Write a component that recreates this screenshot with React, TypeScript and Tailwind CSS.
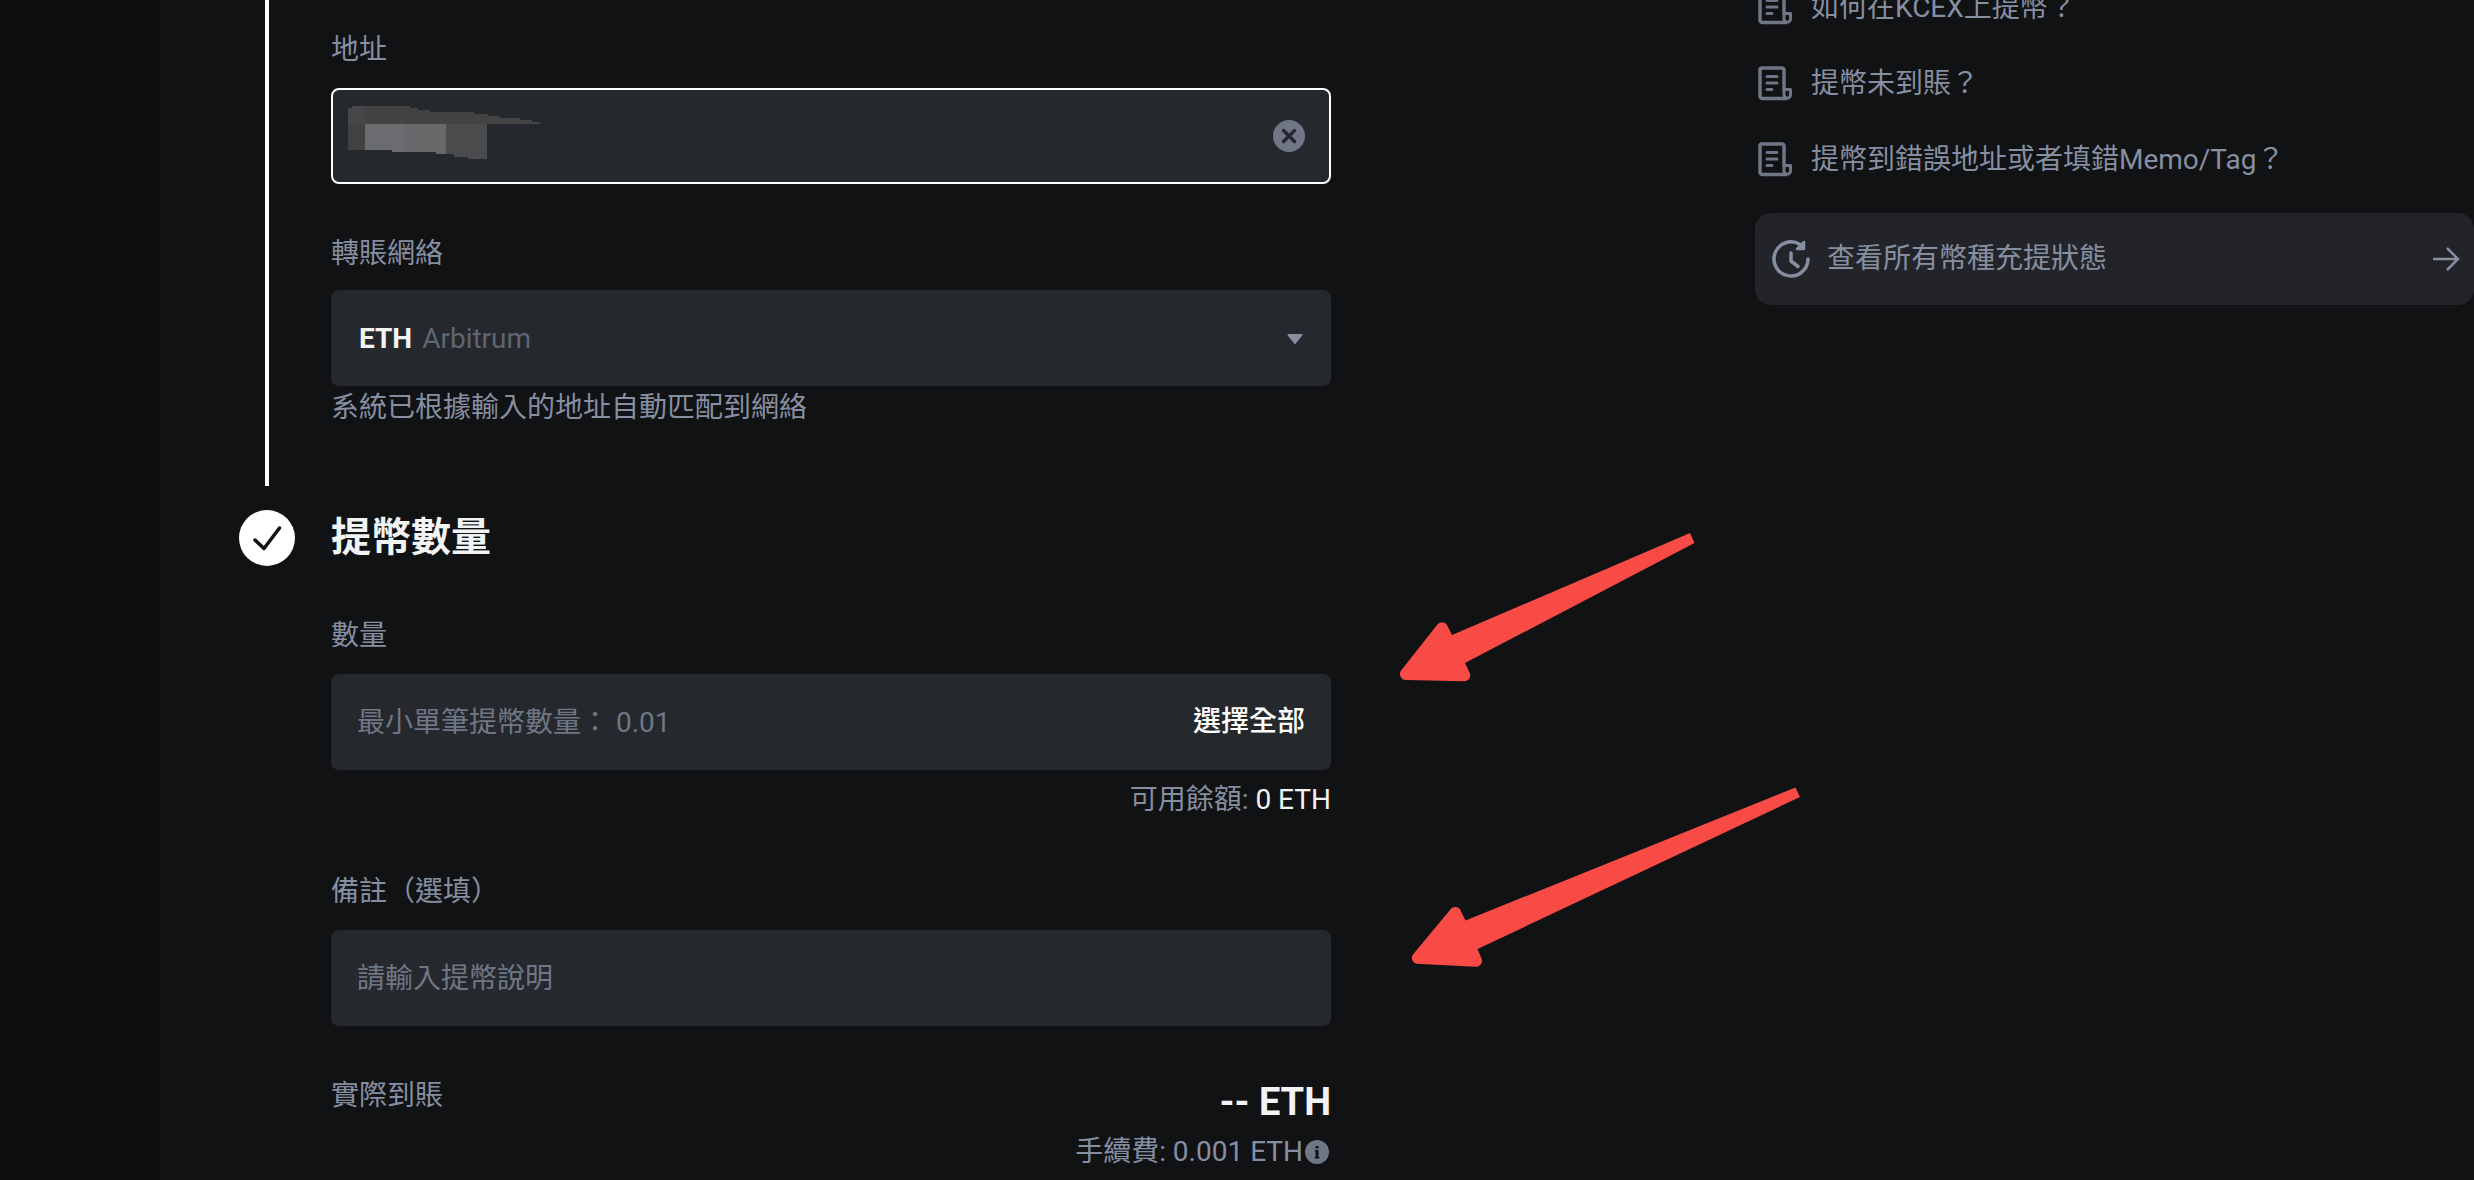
import { type ReactNode } from "react";

const faqs = ["如何在KCEX上提幣？", "提幣未到賬？", "提幣到錯誤地址或者填錯Memo/Tag？"];

function DocIcon() {
  return (
    <svg className="h-9 w-9 shrink-0 text-[#6f7787]" viewBox="0 0 36 36" fill="none" stroke="currentColor" strokeWidth="3.5" aria-hidden="true">
      <path d="M27 24V4a2 2 0 0 0-2-2H5a2 2 0 0 0-2 2v26a2.500 2.500 0 0 0 2.500 2.500H30" strokeLinejoin="round" />
      <path d="M27 23.500h6.500V29a3.250 3.250 0 0 1-6.500 0z" strokeWidth="3" strokeLinejoin="round" />
      <path d="M10 10.500h10M10 17h10M10 23.500h5" strokeWidth="3" strokeLinecap="round" />
    </svg>
  );
}

function ClockIcon() {
  return (
    <svg className="h-10 w-10 shrink-0" viewBox="0 0 40 40" fill="none" stroke="currentColor" strokeWidth="3.5" strokeLinecap="round" aria-hidden="true">
      <path d="M37 20A17 17 0 1 1 29 5.500" />
      <path d="M33 3v7h-7z" fill="currentColor" strokeWidth="2.500" strokeLinejoin="round" />
      <path d="M20 14v8l7 5.500" strokeLinejoin="round" />
    </svg>
  );
}

function Label({ htmlFor, children }: { htmlFor: string; children: ReactNode }) {
  return (
    <label htmlFor={htmlFor} className="block leading-10">
      {children}
    </label>
  );
}

export default function App() {
  return (
    <div className="flex min-h-screen overflow-hidden bg-[#111214] font-[Roboto,'Noto_Sans_CJK_TC',sans-serif] text-[28px] leading-10 text-[#868fa1]">
      <aside className="w-[159px] shrink-0 bg-[#0d0e0f]" />

      <main className="relative flex flex-1 items-start pl-20">
        <form className="w-[1092px] shrink-0">
          <section className="flex gap-9">
            <div className="flex w-14 shrink-0 justify-center">
              <div className="w-1 bg-white" />
            </div>
            <div className="flex-1 pt-[30px] pb-14">
              <Label htmlFor="address">地址</Label>
              <div className="relative mt-[18px] flex h-24 items-center rounded-lg border-2 border-white bg-[#25282c] pr-6 pl-4">
                <input id="address" type="text" className="h-full min-w-0 flex-1 bg-transparent text-white outline-none" />
                <button type="button" aria-label="清除">
                  <svg className="h-8 w-8" viewBox="0 0 32 32" aria-hidden="true">
                    <circle cx="16" cy="16" r="16" fill="#6f7787" />
                    <path d="M10.500 10.500l11 11M21.500 10.500l-11 11" stroke="#25282c" strokeWidth="3.500" strokeLinecap="round" />
                  </svg>
                </button>
                {/* masked address */}
                <svg className="pointer-events-none absolute top-4 left-[15px] h-14 w-[194px]" viewBox="0 0 194 56" aria-hidden="true">
                  <path d="M0 2h4V0h58v2h8v2h12v2h44v2h14v2h12v2h20v2h12v2h8v2H0z" fill="#434343" />
                  <path d="M4 0h13v18H0V2h4z" fill="#464748" />
                  <path d="M0 18h17v26H0z" fill="#424243" />
                  <path d="M17 18h40v28H44v-2H17z" fill="#6b6c6f" />
                  <path d="M57 18h41v30H88v-2H57z" fill="#676869" />
                  <path d="M98 18h41v35h-19v-2h-14v-3h-8z" fill="#4a4b4d" />
                </svg>
              </div>

              <div className="mt-[50px]">
                <Label htmlFor="network">轉賬網絡</Label>
                <div className="relative mt-4 flex h-24 items-center rounded-lg bg-[#25282c] px-7 pt-[2px]">
                  <span className="font-bold text-[#f2f3f5]">ETH</span>
                  <span className="ml-[10px] text-[#5e6673]">Arbitrum</span>
                  <svg className="ml-auto h-[10px] w-4" viewBox="0 0 16 10" fill="currentColor" aria-hidden="true">
                    <path d="M1.500 0h13a1 1 0 0 1 .8 1.600L9 9.300a1.200 1.200 0 0 1-2 0L.7 1.600A1 1 0 0 1 1.500 0z" />
                  </svg>
                  <select id="network" className="absolute inset-0 h-full w-full cursor-pointer opacity-0">
                    <option>ETH Arbitrum</option>
                  </select>
                </div>
                <p className="py-[2px]">系統已根據輸入的地址自動匹配到網絡</p>
              </div>
            </div>
          </section>

          <section className="mt-6 flex gap-9">
            <svg className="h-14 w-14 shrink-0" viewBox="0 0 56 56" aria-hidden="true">
              <circle cx="28" cy="28" r="28" fill="#fff" />
              <path d="M16 30l9 8.500L40.500 18" fill="none" stroke="#111214" strokeWidth="3.500" strokeLinecap="round" strokeLinejoin="round" />
            </svg>
            <div className="flex-1">
              <h2 className="text-[40px] leading-14 font-bold text-[#f2f3f5]">提幣數量</h2>

              <div className="mt-[50px]">
                <Label htmlFor="amount">數量</Label>
                <div className="mt-[18px] flex h-24 items-center rounded-lg bg-[#25282c] px-[26px]">
                  <input id="amount" type="text" placeholder="最小單筆提幣數量： 0.01" className="h-full min-w-0 flex-1 bg-transparent text-white outline-none placeholder:text-[#6f7787]" />
                  <button type="button" className="font-medium text-white">選擇全部</button>
                </div>
                <p className="mt-[10px] text-right">
                  可用餘額: <span className="text-[#f2f3f5]">0 ETH</span>
                </p>
              </div>

              <div className="mt-[52px]">
                <Label htmlFor="note">備註（選填）</Label>
                <div className="mt-[18px] flex h-24 items-center rounded-lg bg-[#25282c] px-[26px]">
                  <input id="note" type="text" placeholder="請輸入提幣說明" className="h-full min-w-0 flex-1 bg-transparent text-white outline-none placeholder:text-[#6f7787]" />
                </div>
              </div>

              <div className="mt-[50px] flex justify-between">
                <span>實際到賬</span>
                <div className="flex flex-col items-end gap-1">
                  <strong className="text-[38px] leading-13 font-bold text-[#f2f3f5]">-- ETH</strong>
                  <div className="flex items-center gap-[2px] pr-[2px]">
                    手續費: 0.001 ETH
                    <svg className="h-6 w-6" viewBox="0 0 24 24" aria-hidden="true">
                      <circle cx="12" cy="12" r="12" fill="#6f7787" />
                      <path d="M10.500 6h3v2.500h-3zM10 10h3.500v7h1v1.500H9.500V17h1v-5.500H10z" fill="#111214" />
                    </svg>
                  </div>
                </div>
              </div>
            </div>
          </section>
        </form>

        <div className="-mt-3 ml-[424px] min-w-0 flex-1">
          <ul className="flex flex-col gap-9">
            {faqs.map((faq) => (
              <li key={faq}>
                <a href="#" className="flex items-center gap-[18px] pl-[2px]">
                  <DocIcon />
                  {faq}
                </a>
              </li>
            ))}
          </ul>
          <a href="#" className="mt-[33px] flex h-[92px] items-center gap-4 rounded-2xl bg-[#232429] pr-[14px] pl-4">
            <ClockIcon />
            查看所有幣種充提狀態
            <svg className="ml-auto h-6 w-7" viewBox="0 0 28 24" fill="none" stroke="currentColor" strokeWidth="2.500" aria-hidden="true">
              <path d="M1 12h25M15 1l11 11-11 11" />
            </svg>
          </a>
        </div>

        {/* pointers to the amount and note fields */}
        <svg className="pointer-events-none absolute top-[530px] left-[1240px] h-[440px] w-[402px]" viewBox="0 0 402 440" fill="#f84b46" aria-hidden="true">
          <path d="M291 3l4.500 10L66 133l4.500 9.500A6 6 0 0 1 65 151.300L7 150a6 6 0 0 1-4.500-10L38 95a6 6 0 0 1 10.500 1l4.500 9z" />
          <path d="M396.500 257.500l4.500 9.500L78.500 419l4 9.500a6 6 0 0 1-6 8.300l-59-3A6 6 0 0 1 14 424.500L51 380a6 6 0 0 1 11 1.500l4.500 9z" />
        </svg>
      </main>
    </div>
  );
}
